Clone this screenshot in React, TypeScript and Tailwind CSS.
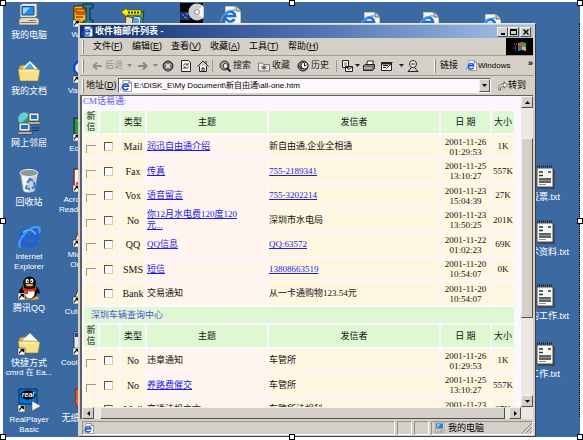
import React from 'react';
import clsx from 'clsx';

interface MailRow {
  type: string;
  subject: React.ReactNode;
  link?: boolean;
  sender: string;
  senderLink?: boolean;
  date: string;
  time: string;
  size?: string;
  flag?: boolean;
}

const INBOX: MailRow[] = [
  { type: 'Mail', subject: '润迅自由通介绍', link: true, sender: '新自由通,企业全相通', date: '2001-11-26', time: '01:29:53', size: '1K', flag: true },
  { type: 'Fax', subject: '传真', link: true, sender: '755-2189341', senderLink: true, date: '2001-11-25', time: '13:10:27', size: '557K', flag: true },
  { type: 'Vox', subject: '语音留言', link: true, sender: '755-3202214', senderLink: true, date: '2001-11-23', time: '15:04:39', size: '27K', flag: true },
  { type: 'No', subject: <>你12月水电费120度120<br />元...</>, link: true, sender: '深圳市水电局', date: '2001-11-23', time: '13:50:25', size: '201K', flag: true },
  { type: 'QQ', subject: 'QQ信息', link: true, sender: 'QQ:63572', senderLink: true, date: '2001-11-22', time: '01:02:23', size: '69K', flag: true },
  { type: 'SMS', subject: '短信', link: true, sender: '13808663519', senderLink: true, date: '2001-11-20', time: '10:54:07', size: '0K', flag: true },
  { type: 'Bank', subject: '交易通知', sender: '从一卡通购物123.54元', date: '2001-11-20', time: '10:54:07' },
];

const VEHICLE: MailRow[] = [
  { type: 'No', subject: '违章通知', sender: '车管所', date: '2001-11-26', time: '01:29:53', size: '1K', flag: true },
  { type: 'No', subject: '养路费催交', link: true, sender: '车管所', date: '2001-11-25', time: '13:10:27', size: '557K', flag: true },
  { type: 'Mail', subject: '交通法规之六', sender: '车管所法规科', date: '2001-11-23', time: '15:04:39', size: '27K', flag: true },
];

const MENUS = [
  ['文件', 'F'],
  ['编辑', 'E'],
  ['查看', 'V'],
  ['收藏', 'A'],
  ['工具', 'T'],
  ['帮助', 'H'],
];

const RAISED = 'bg-[#d4d0c8] border border-t-[#f4f2ee] border-l-[#f4f2ee] border-r-[#505050] border-b-[#505050]';

/* ---------- icons ---------- */

function IePage({ className }: { className?: string }) {
  return (
    <svg viewBox="0 0 12 12" className={clsx('shrink-0', className)}>
      <path d="M3 .5h6L11.500 3v8.500H3z" fill="#fff" stroke="#777" strokeWidth=".7" />
      <path d="M9 .5V3h2.500" fill="#d8d8d8" stroke="#555" strokeWidth=".7" />
      <path d="M8.200 8.300A3 3 0 1 1 8.500 6.200H3" fill="none" stroke="#1450d8" strokeWidth="1.600" />
      <path d="M.8 10.500C-.6 8 5 3 9 3.300" fill="none" stroke="#3a8cf0" strokeWidth=".8" />
    </svg>
  );
}

function ShortcutArrow() {
  return (
    <>
      <path d="M1 17h7v7H1z" fill="#fff" stroke="#333" strokeWidth=".6" />
      <path d="M2.500 22.500c0-2 1-3 2.500-3M3.800 18.300h2.900v2.900z" fill="#000" stroke="#000" />
    </>
  );
}

function ComputerIcon({ className }: { className?: string }) {
  return (
    <svg viewBox="0 0 24 24" className={clsx('shrink-0', className)}>
      <path d="M3 2l3-1.500h14v12l-2 2H3z" fill="#e8e4d8" stroke="#59605f" strokeWidth=".7" />
      <path d="M5 3.500h12v8.500H5z" fill="#1e8ce8" stroke="#174a88" />
      <path d="M6 4.500h7L7 11H6z" fill="#8ed6ff" />
      <path d="M2 16l3-1.500h15l2 2v4L20 22H2z" fill="#dcd8cc" stroke="#5a5a58" strokeWidth=".7" />
      <path d="M12 17.500h7M3.500 19.500h16" stroke="#77756c" />
      <path d="M15 15.500l6 6" stroke="#f0c890" />
    </svg>
  );
}

function FolderIcon({ shortcut }: { shortcut?: boolean }) {
  return (
    <svg viewBox="0 0 24 24" className="size-6 shrink-0">
      <path d="M2 8l2-2h5l2 2h9v3H2z" fill="#d8b850" stroke="#7c6820" strokeWidth=".6" />
      <path d="M5 9l8-7 8 8v4H5z" fill="#fafcff" stroke="#8090a0" strokeWidth=".6" />
      <path d="M8 9l5-5 4 5 1 3H8z" fill="#48a8e8" opacity={shortcut ? 0 : 1} />
      <path d="M1 10h17l5 1-2 11H3z" fill="#f8e084" stroke="#8c7830" strokeWidth=".6" />
      <path d="M3 12h15" stroke="#fff8c8" />
      {shortcut && <ShortcutArrow />}
    </svg>
  );
}

function NetworkIcon() {
  return (
    <svg viewBox="0 0 24 24" className="size-6 shrink-0">
      <circle cx="8" cy="8" r="7.500" fill="#38a048" />
      <path d="M2 5c4-5 8-4 9-1S5 9 5 13C1 11 1 8 2 5z" fill="#68c8f0" />
      <path d="M12 2h10v8H12zM2 12h11v8H2z" fill="#eceadf" stroke="#444" strokeWidth=".7" />
      <path d="M14 4h6v4h-6zM4 14h7v4H4z" fill="#1c74d0" />
      <path d="M11 11h12v2H11zM1 21h14v2H1z" fill="#dcd8cc" stroke="#333" strokeWidth=".5" />
      <path d="M15 17h8M15 19.500h7" stroke="#103860" />
    </svg>
  );
}

function RecycleIcon() {
  return (
    <svg viewBox="0 0 24 26" className="h-[26px] w-6 shrink-0">
      <path d="M3 5l3 18c4 3 9 2 12 0l3-17z" fill="#c8ced2" stroke="#68747c" strokeWidth=".7" />
      <path d="M5 8l2 15c2 1 3 1 4 1V8z" fill="#f6f8f8" />
      <ellipse cx="12" cy="5" rx="9" ry="3.500" fill="#8c989c" stroke="#f0f4f4" />
      <path d="M10 15l3-4 3 2M17 14l1 5-3 1M13 21l-4-1 1-3" fill="none" stroke="#2878e0" strokeWidth="2" />
    </svg>
  );
}

function IeIcon() {
  return (
    <svg viewBox="0 0 24 24" className="size-6 shrink-0">
      <path d="M19.500 16.500a8 8 0 1 1 1-4.500H8" fill="none" stroke="#1a62dc" strokeWidth="4.500" />
      <path d="M18.500 9.500a7.500 7.500 0 0 0-12.500-2" fill="none" stroke="#6cc0fc" strokeWidth="1.500" />
      <path d="M3.500 22.500C-2 18 11 1.500 20 2c4 .5 3 4 2 6" fill="none" stroke="#48a0f8" strokeWidth="1.800" />
    </svg>
  );
}

function QqIcon() {
  return (
    <svg viewBox="0 0 24 24" className="size-6 shrink-0">
      <ellipse cx="9" cy="22" rx="5" ry="1.800" fill="#f0a020" />
      <ellipse cx="17" cy="22" rx="5" ry="1.800" fill="#f0a020" />
      <path d="M6 10c-3 3-5 6-3 8l3-2M19 10c3 3 5 6 3 8l-3-2" fill="#000" />
      <ellipse cx="12.500" cy="16" rx="7.500" ry="7" fill="#080808" />
      <ellipse cx="12.500" cy="17" rx="5.200" ry="5.500" fill="#fff" />
      <ellipse cx="12.500" cy="7" rx="6.500" ry="6.500" fill="#080808" />
      <ellipse cx="10.300" cy="5" rx="1.700" ry="2.300" fill="#fff" />
      <ellipse cx="14.700" cy="5" rx="1.700" ry="2.300" fill="#fff" />
      <circle cx="10.800" cy="5.300" r=".8" />
      <circle cx="14.200" cy="5.300" r=".8" />
      <ellipse cx="12.500" cy="9" rx="3.800" ry="1.300" fill="#f8b020" />
      <path d="M5.500 11c4 3 10 3 14 0v3c-4 2-10 2-14 0zM8 14h3v4H8z" fill="#d83018" />
      <ShortcutArrow />
    </svg>
  );
}

function RealIcon() {
  return (
    <svg viewBox="0 0 24 24" className="size-6 shrink-0">
      <path d="M2 1h18v15H2z" fill="#0870d0" stroke="#042c60" />
      <ellipse cx="11" cy="7" rx="7.500" ry="4.500" fill="#050505" />
      <text x="11" y="9" textAnchor="middle" fill="#fff" className="font-['Liberation_Sans'] text-[7px] font-bold italic">real</text>
      <path d="M15 13l9 5-9 5z" fill="#f4f4f0" stroke="#555" strokeWidth=".6" />
      <ShortcutArrow />
    </svg>
  );
}

function TxtIcon() {
  return (
    <svg viewBox="0 0 20 24" className="h-6 w-5 shrink-0">
      <path d="M2 3h16v19H2z" fill="#f8f8f4" stroke="#505050" />
      <path d="M19 4v19H3" fill="none" stroke="#404040" strokeWidth="1.500" />
      <path d="M2 1.500h16" stroke="#202020" strokeWidth="2" strokeDasharray="1 1" />
      <path d="M4 7h4M13 7h3M4 10.500h4M4 14h12M4 17h12" stroke="#303030" strokeWidth="1.500" />
      <path d="M4 15.500h12M4 19.500h7" stroke="#909090" />
    </svg>
  );
}

function HtmlDocIcon() {
  return (
    <svg viewBox="0 0 22 22" className="size-[22px] shrink-0">
      <path d="M5 1h11l5 5v15H5z" fill="#f4f4f0" stroke="#666" strokeWidth=".7" />
      <path d="M16 1v5h5" fill="#ccc" stroke="#444" strokeWidth=".7" />
      <path d="M14.500 14a5 5 0 1 1 .6-3H6" fill="none" stroke="#1c6ce0" strokeWidth="2.600" />
      <path d="M1 17C1 11 9 4 15 5" fill="none" stroke="#40a0f8" strokeWidth="1.400" />
    </svg>
  );
}

function BooksIcon() {
  return (
    <svg viewBox="0 0 24 22" className="h-[22px] w-6 shrink-0">
      <path d="M9 5h14l-2 15H4l2-9z" fill="#48a860" stroke="#173820" />
      <path d="M5 9l7 2-1 9H4z" fill="#e8dcc0" stroke="#783020" />
      <path d="M13 9l7 1-1 10h-8z" fill="#c8e8f0" stroke="#20507c" />
      <circle cx="15" cy="14" r="3" fill="#50a0e0" />
      <path d="M0 5l6-4v2h14v5H6v2z" fill="#f8f000" stroke="#504c00" strokeWidth=".6" />
      <path d="M7 5.500h12" stroke="#303000" strokeWidth="2" strokeDasharray="2 1" />
    </svg>
  );
}

function DiscIcon() {
  return (
    <svg viewBox="0 0 24 22" className="h-[22px] w-6 shrink-0">
      <path d="M0 1h23v20H0z" fill="#05070c" />
      <path d="M0 10h10v8H0z" fill="#183878" />
      <path d="M2 12l2 2M6 11l2 2M4 15l3 1" stroke="#80a0e0" />
      <circle cx="17" cy="10" r="8.500" fill="#ccd0d4" />
      <path d="M17 10L23 3v14z" fill="#f8f8f8" />
      <circle cx="17" cy="10" r="2.500" fill="#fff" stroke="#888" />
    </svg>
  );
}

function ZipIcon() {
  return (
    <svg viewBox="0 0 24 24" className="size-6 shrink-0">
      <path d="M2 3h14v17H2z" fill="#f0c010" stroke="#302400" />
      <path d="M4 6h9v3H4zM4 11h9M4 14h7" fill="none" stroke="#c03010" strokeWidth="1.500" />
      <path d="M11 1h10v4h-3v12h3v4H11v-3h3V5h-3z" fill="#287890" stroke="#082830" />
      <ShortcutArrow />
    </svg>
  );
}

type Tone = 'blue' | 'green' | 'red' | 'key' | 'wave' | 'fox';

function AppShortcutIcon({ tone }: { tone: Tone }) {
  return (
    <svg viewBox="0 0 24 24" className="size-6 shrink-0">
      {tone === 'blue' && <circle cx="9" cy="9" r="7" fill="#f4f8ff" stroke="#1848c8" strokeWidth="2.500" />}
      {tone === 'green' && (
        <>
          <path d="M2 1h20v21H2z" fill="#289838" stroke="#101828" />
          <path d="M5 3l7 9V3z" fill="#e8d820" />
        </>
      )}
      {tone === 'red' && (
        <>
          <path d="M2 1h20v21H2z" fill="#fff4ec" stroke="#802818" strokeWidth="1.500" />
          <path d="M4 16c5-3 7-7 7-12 0 7 5 9 9 10-6-1-11-1-16 2z" fill="none" stroke="#e04818" strokeWidth="1.800" />
        </>
      )}
      {tone === 'key' && <path d="M3 17l6-14 12 4-3 14z" fill="#f0e8b0" stroke="#404040" />}
      {tone === 'wave' && (
        <>
          <path d="M2 1h20v21H2z" fill="#e8ecf4" stroke="#303848" />
          <path d="M3 2h18v4H3z" fill="#2040a8" />
        </>
      )}
      {tone === 'fox' && <path d="M3 2l4 3 10 4v13H6l-3-6 1-6z" fill="#e86828" stroke="#802c10" />}
      {tone !== 'fox' && <ShortcutArrow />}
    </svg>
  );
}

/* ---------- desktop ---------- */

const DESKTOP_LEFT = [
  { top: 'top-[3px]', icon: <ComputerIcon className="size-6" />, label: ['我的电脑'] },
  { top: 'top-[59px]', icon: <FolderIcon />, label: ['我的文档'] },
  { top: 'top-[111px]', icon: <NetworkIcon />, label: ['网上邻居'] },
  { top: 'top-[168px]', icon: <RecycleIcon />, label: ['回收站'] },
  { top: 'top-[225px]', icon: <IeIcon />, label: ['Internet', 'Explorer'] },
  { top: 'top-[276px]', icon: <QqIcon />, label: ['腾讯QQ'] },
  { top: 'top-[331px]', icon: <FolderIcon shortcut />, label: ['快捷方式', 'cmrd 在 Ea...'] },
  { top: 'top-[388px]', icon: <RealIcon />, label: ['RealPlayer', 'Basic'] },
];

const DESKTOP_SECOND = [
  { top: 'top-[3px]', icon: <ZipIcon />, label: ['WinZip'] },
  { top: 'top-[59px]', icon: <AppShortcutIcon tone="blue" />, label: ['VanDyke'] },
  { top: 'top-[117px]', icon: <AppShortcutIcon tone="green" />, label: ['EditPlus'] },
  { top: 'top-[168px]', icon: <AppShortcutIcon tone="red" />, label: ['Acrobat 5.0', 'Reader Home'] },
  { top: 'top-[223px]', icon: <AppShortcutIcon tone="key" />, label: ['Microsoft', 'Outlook'] },
  { top: 'top-[280px]', icon: <AppShortcutIcon tone="key" />, label: ['CuteFTP 4'] },
  { top: 'top-[331px]', icon: <AppShortcutIcon tone="wave" />, label: ['Cool Edit 2.0'] },
  { top: 'top-[386px]', icon: <AppShortcutIcon tone="fox" />, label: ['无纸化办公'] },
];

const DESKTOP_RIGHT = [
  { top: 'top-[165px]', label: '股票.txt' },
  { top: 'top-[220px]', label: '技术资料.txt' },
  { top: 'top-[284px]', label: '我的工作.txt' },
  { top: 'top-[342px]', label: '工作.txt' },
];

const HANDLES = [
  'left-0 top-0',
  'left-1/2 top-0 -translate-x-1/2',
  'right-0 top-0',
  'left-0 top-[218px]',
  'right-0 top-[218px]',
  'left-0 bottom-0',
  'left-1/2 bottom-0 -translate-x-1/2',
  'right-0 bottom-0',
];

function DesktopIcon({ className, icon, label }: { className: string; icon: React.ReactNode; label: string[] }) {
  return (
    <div className={clsx('absolute flex w-16 flex-col items-center gap-[3px] text-center leading-[10px] whitespace-nowrap text-white', className)}>
      {icon}
      <div>
        {label.map((line) => (
          <div key={line} className={/^[A-Za-z]/.test(line) ? 'text-[8px]' : 'text-[9px]'}>{line}</div>
        ))}
      </div>
    </div>
  );
}

/* ---------- browser ---------- */

function TitleBar() {
  return (
    <div className="flex h-[13px] shrink-0 items-center gap-[2px] bg-linear-to-r from-[#12306f] via-[#4c70b0] via-50% to-[#a8c4e8] px-[2px] text-[9px] font-bold text-white">
      <IePage className="size-[11px]" />
      <h1 className="flex-1 leading-[13px]">收件箱邮件列表 -</h1>
      <div className="flex">
        <button aria-label="最小化" className={clsx('flex h-[10px] w-[11px] items-end justify-center pb-px', RAISED)}>
          <span className="h-[2px] w-1 bg-black" />
        </button>
        <button aria-label="最大化" className={clsx('flex h-[10px] w-[11px] items-center justify-center', RAISED)}>
          <span className="h-[6px] w-[7px] border border-t-2 border-black" />
        </button>
        <button aria-label="关闭" className={clsx('ml-px flex h-[10px] w-[11px] items-center justify-center', RAISED)}>
          <svg viewBox="0 0 6 6" className="size-[6px]">
            <path d="M.5.5l5 5M5.500.5l-5 5" stroke="#000" strokeWidth="1.300" />
          </svg>
        </button>
      </div>
    </div>
  );
}

function Grip() {
  return <span className="h-[14px] w-[2px] shrink-0 border-r border-l border-l-white border-r-[#888]" />;
}

function MenuBar() {
  return (
    <div className="flex h-[18px] shrink-0 items-center border-b border-[#a09c94] pl-[2px]">
      <Grip />
      <nav className="flex flex-1 gap-3 pl-[9px]">
        {MENUS.map(([name, key]) => (
          <button key={key} className="w-[27px] text-left whitespace-nowrap">
            {name}(<u>{key}</u>)
          </button>
        ))}
      </nav>
      <div className="flex h-[17px] w-[27px] items-center justify-center bg-black">
        <svg viewBox="0 0 14 12" className="h-3 w-[14px]">
          <path d="M5 2l4-1v4L5 6z" fill="#d85030" />
          <path d="M9 1l4 1v4L9 5z" fill="#48a048" />
          <path d="M5 6l4-1v4l-4 1z" fill="#3870c8" />
          <path d="M9 5l4 1v4L9 9z" fill="#d8b838" />
          <path d="M1 3h3M2 5h2M0 7h4M2 9h2" stroke="#8898b8" strokeDasharray="1 1" />
        </svg>
      </div>
    </div>
  );
}

function Caret() {
  return (
    <svg viewBox="0 0 5 3" className="h-[3px] w-[5px] shrink-0">
      <path d="M0 0h5L2.500 3z" fill="currentColor" />
    </svg>
  );
}

function Tool({ label, text, className, children }: { label: string; text?: string; className?: string; children: React.ReactNode }) {
  return (
    <button aria-label={label} className={clsx('flex shrink-0 items-center gap-[2px] whitespace-nowrap', className)}>
      <svg viewBox="0 0 12 12" className="size-3 shrink-0" fill="none" stroke="currentColor">
        {children}
      </svg>
      {text}
    </button>
  );
}

function Toolbar() {
  return (
    <div className="flex h-5 shrink-0 items-center border-b border-[#a09c94] pl-[2px] text-[#222]">
      <Grip />
      <div className="flex flex-1 items-center pl-[7px]">
        <Tool label="后退" text="后退" className="w-[36px] text-[#929292]">
          <path d="M11 6H3M6 2.500L2.500 6 6 9.500" strokeWidth="2" />
        </Tool>
        <span className="w-[10px] text-[#888]"><Caret /></span>
        <Tool label="前进" className="w-[16px] text-[#888]">
          <path d="M1 6h8M6 2.500L9.500 6 6 9.500" strokeWidth="2" />
        </Tool>
        <span className="w-[9px] text-[#888]"><Caret /></span>
        <Tool label="停止" className="w-[18px]">
          <circle cx="6" cy="6" r="5" fill="#777" />
          <path d="M4 4l4 4M8 4L4 8" stroke="#eee" strokeWidth="1.500" />
        </Tool>
        <Tool label="刷新" className="w-[17px]">
          <path d="M1.500.5h7l2 2v9h-9z" fill="#fafafa" />
          <path d="M3.500 5.500c0-2 3-2 4-1M8 3v2H6M8.500 6.500c0 2-3 2-4 1M4 9V7h2" stroke="#444" />
        </Tool>
        <Tool label="主页" className="w-[15px]">
          <path d="M2.500 6v5.500h7V6" fill="#f4f4f4" />
          <path d="M.5 6.500L6 1l5.500 5.500M9 1v3M5 11.500V8h2v3.500" />
        </Tool>
        <span className="mr-[6px] h-3 w-px bg-[#a09c94]" />
        <Tool label="搜索" text="搜索" className="w-[39px]">
          <circle cx="5.500" cy="5.500" r="4.500" fill="#aaa" />
          <circle cx="6.500" cy="6" r="2.500" fill="#fff" />
          <path d="M8 8l3.500 3.500" strokeWidth="2" />
        </Tool>
        <Tool label="收藏" text="收藏" className="w-[39px]">
          <path d="M.5 3h4l1 1.500h6V11H.5z" fill="#eee" stroke="#777" />
          <path d="M6 5v5M3.500 6.500l5 2M8.500 6.500l-5 2" stroke="#444" />
        </Tool>
        <Tool label="历史" text="历史" className="w-[39px]">
          <circle cx="6" cy="6" r="5" fill="#888" />
          <circle cx="7.500" cy="5.500" r="3.500" fill="#fafafa" />
          <path d="M7.500 3v3l2-1M1 5l4 4" />
        </Tool>
        <span className="mr-1 h-3 w-px bg-[#a09c94]" />
        <Tool label="邮件" className="w-[14px]">
          <path d="M1.500.5h6v7h-6z" fill="#fafafa" />
          <path d="M3 3h3M3 5h3" stroke="#777" />
          <path d="M4.500 6.500h7v5h-7zM4.500 6.500L8 9.500l3.500-3" fill="#fafafa" />
        </Tool>
        <span className="w-[8px]"><Caret /></span>
        <Tool label="打印" className="w-[18px]">
          <path d="M3.500 5l1-4h6l-1 4z" fill="#fff" />
          <path d="M.5 5.500l2-1h9v4l-2 2h-9z" fill="#777" />
          <path d="M1 8h8" stroke="#ddd" />
        </Tool>
        <Tool label="编辑" className="w-[18px]">
          <path d="M.5 2.500h10v8H.5z" fill="#fafafa" />
          <path d="M2 5.500h5M2 7.500h3M5.500 8.500l6-6" />
          <path d="M.5 3.500h10" strokeWidth="2" />
        </Tool>
        <span className="w-[8px]"><Caret /></span>
        <Tool label="讨论" className="w-[14px]">
          <circle cx="6" cy="4" r="3.500" fill="#f4f4f4" />
          <path d="M4.500 7.500L1 11.500h10L7.500 7.500M4 4h4" />
        </Tool>
      </div>
      <div className="flex w-[99px] shrink-0 items-center gap-1 text-black">
        <Grip />
        <span>链接</span>
        <a href="#windows" className="ml-1 flex flex-1 items-center gap-px text-[8px]">
          <IePage className="size-[11px]" />
          Windows
        </a>
        <button aria-label="更多链接" className="mb-1 font-bold">»</button>
      </div>
    </div>
  );
}

function AddressBar() {
  return (
    <div className="flex h-[19px] shrink-0 items-center pl-[2px]">
      <Grip />
      <label htmlFor="address" className="w-[34px] shrink-0 pl-[2px] whitespace-nowrap">
        地址(<u>D</u>)
      </label>
      <div className="flex h-[15px] min-w-0 flex-1 items-center border border-t-[#606060] border-r-white border-b-white border-l-[#606060] bg-[#fdf9ff] pl-px">
        <IePage className="size-3" />
        <input id="address" className="min-w-0 flex-1 bg-transparent pl-[2px] text-[8px] outline-none" defaultValue="E:\DISK_E\My Document\新自由通\all-one.htm" />
        <button aria-label="展开地址" className={clsx('flex h-[13px] w-[11px] items-center justify-center', RAISED)}>
          <Caret />
        </button>
      </div>
      <button className="flex w-[42px] shrink-0 items-center justify-center whitespace-nowrap">
        <svg viewBox="0 0 10 10" className="size-[10px]" fill="#f8f8f8" stroke="#444" strokeWidth=".8">
          <path d="M1 9c-1-4 1-6 5-6V.8L9.500 4 6 7.300V5C3.500 5 2 6 2.500 9z" />
        </svg>
        转到
      </button>
    </div>
  );
}

function HeaderRow() {
  return (
    <tr className="h-[22px] bg-[#def8d2] text-center">
      <th className="font-normal">新信</th>
      <th aria-label="选择" />
      <th className="font-normal">类型</th>
      <th className="font-normal">主题</th>
      <th className="font-normal">发信者</th>
      <th className="font-normal">日 期</th>
      <th className="font-normal">大小</th>
    </tr>
  );
}

function Row({ row }: { row: MailRow }) {
  return (
    <tr className="h-[23px] bg-[#fff6e0] even:h-[22px]">
      <td>
        {row.flag && <span className="mt-[5px] ml-[2px] block h-2 w-[10px] border-t border-l border-[#999]" />}
      </td>
      <td>
        <input
          type="checkbox"
          aria-label={`选择 ${row.type}`}
          className="ml-1 block size-[9px] appearance-none border border-t-[#555] border-r-[#ccc] border-b-[#ccc] border-l-[#555] bg-white"
        />
      </td>
      <td className="text-center text-[10px]">{row.type}</td>
      <td className="bg-[#fff5ee] whitespace-nowrap">
        {row.link ? <a href="#mail" className="text-[#1c1ce8] underline">{row.subject}</a> : row.subject}
      </td>
      <td>
        {row.senderLink ? <a href="#sender" className="text-[#1c1ce8] underline">{row.sender}</a> : row.sender}
      </td>
      <td className="text-center leading-[10px]">
        {row.date}
        <br />
        {row.time}
      </td>
      <td className="text-center">{row.size}</td>
    </tr>
  );
}

function Page() {
  return (
    <main className="min-w-0 flex-1 overflow-hidden bg-[#fcf6ff] pr-[5px] font-['Liberation_Serif','Noto_Sans_CJK_SC',serif] text-[9px] leading-[11px] text-[#111]">
      <h2 className="h-[13px] pl-px text-[#5858f0]">CM话易通:</h2>
      <table className="w-full table-fixed border-separate border-spacing-[2px] [&_td]:p-0 [&_th]:p-0">
        <colgroup>
          <col className="w-[14px]" />
          <col className="w-[19px]" />
          <col className="w-6" />
          <col className="w-[120px]" />
          <col />
          <col className="w-[49px]" />
          <col className="w-[22px]" />
        </colgroup>
        <thead>
          <HeaderRow />
        </thead>
        <tbody>
          {INBOX.map((row) => (
            <Row key={row.type} row={row} />
          ))}
        </tbody>
        <tbody>
          <tr className="h-4 bg-[#def8d2]">
            <th colSpan={7} className="text-left font-normal text-[#5050d8]">
              <span className="pl-[7px]">深圳车辆查询中心</span>
            </th>
          </tr>
          <HeaderRow />
        </tbody>
        <tbody>
          {VEHICLE.map((row) => (
            <Row key={row.date} row={row} />
          ))}
        </tbody>
      </table>
    </main>
  );
}

function ScrollButton({ label, rotate }: { label: string; rotate: string }) {
  return (
    <button aria-label={label} className={clsx('flex size-3 shrink-0 items-center justify-center text-black', RAISED)}>
      <span className={rotate}><Caret /></span>
    </button>
  );
}

function StatusBar() {
  const panel = 'h-full border border-t-[#909090] border-l-[#909090] border-r-white border-b-white';
  return (
    <footer className="flex h-[14px] shrink-0 items-center gap-[2px] pl-[2px]">
      <div className={clsx('flex flex-1 items-center', panel)}>
        <IePage className="size-[11px]" />
      </div>
      <div className={clsx('w-[15px]', panel)} />
      <div className={clsx('w-[15px]', panel)} />
      <div className={clsx('flex w-[102px] items-center gap-[2px] pl-[2px] whitespace-nowrap', panel)}>
        <ComputerIcon className="size-3" />
        <span className="flex-1">我的电脑</span>
        <svg viewBox="0 0 10 10" className="size-[10px]">
          <path d="M0 10L10 0M4 10l6-6M8 10l2-2" stroke="#888" />
        </svg>
      </div>
    </footer>
  );
}

function BrowserWindow() {
  return (
    <section className="absolute top-[23px] right-[47px] bottom-[3px] left-[78px] flex flex-col border border-t-[#e8e6e0] border-r-[#404040] border-b-[#404040] border-l-[#d4d0c8] bg-[#d4d0c8] p-px pr-[2px] text-[9px] leading-[11px] text-black">
      <TitleBar />
      <MenuBar />
      <Toolbar />
      <AddressBar />
      <div className="mb-[2px] flex min-h-0 flex-1 flex-col border-t border-l-2 border-t-[#606060] border-l-[#606060]">
        <div className="flex min-h-0 flex-1">
          <Page />
          <div className="flex w-3 shrink-0 flex-col bg-[#ebe8e4]">
            <ScrollButton label="向上" rotate="rotate-180" />
            <div className="flex flex-1 flex-col pt-[30px]">
              <div className={clsx('h-[180px]', RAISED)} />
            </div>
            <ScrollButton label="向下" rotate="rotate-0" />
          </div>
        </div>
        <div className="flex h-3 shrink-0 bg-[#ebe8e4] pr-3">
          <ScrollButton label="向左" rotate="rotate-90" />
          <div className={clsx('mr-1 ml-[6px] flex-1', RAISED)} />
          <ScrollButton label="向右" rotate="-rotate-90" />
        </div>
      </div>
      <StatusBar />
    </section>
  );
}

export default function App() {
  return (
    <div className="relative h-screen overflow-hidden bg-white font-['Liberation_Sans','Noto_Sans_CJK_SC',sans-serif]">
      <div className="absolute inset-x-[3px] top-[2px] bottom-[3px] bg-[#3b6aa2]" />
      {DESKTOP_LEFT.map((item) => (
        <DesktopIcon key={item.top} className={clsx('left-[-3px]', item.top)} icon={item.icon} label={item.label} />
      ))}
      {DESKTOP_SECOND.map((item) => (
        <DesktopIcon key={item.top} className={clsx('left-[52px]', item.top)} icon={item.icon} label={item.label} />
      ))}
      <DesktopIcon className="top-[7px] left-[101px]" icon={<BooksIcon />} label={[]} />
      <DesktopIcon className="top-[2px] left-[160px]" icon={<DiscIcon />} label={[]} />
      <DesktopIcon className="top-[5px] left-[199px]" icon={<HtmlDocIcon />} label={[]} />
      <DesktopIcon className="top-[11px] left-[338px]" icon={<HtmlDocIcon />} label={[]} />
      <DesktopIcon className="top-[11px] left-[397px]" icon={<HtmlDocIcon />} label={[]} />
      <DesktopIcon className="top-[13px] left-[459px]" icon={<HtmlDocIcon />} label={[]} />
      {DESKTOP_RIGHT.map((item) => (
        <DesktopIcon key={item.top} className={clsx('right-[6px]', item.top)} icon={<TxtIcon />} label={[item.label]} />
      ))}
      <BrowserWindow />
      <div className="absolute inset-y-[23px] right-[3px] border-r border-dotted border-black" />
      {HANDLES.map((place) => (
        <span key={place} className={clsx('absolute size-[6px] border border-black bg-white', place)} />
      ))}
    </div>
  );
}
